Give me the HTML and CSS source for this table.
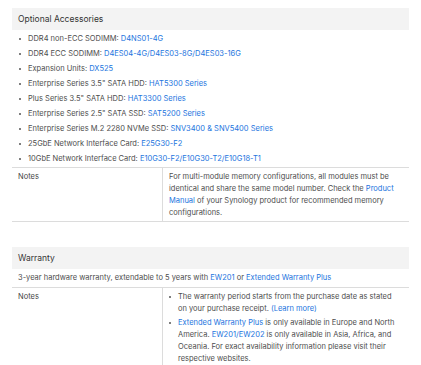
FILE: index.html
```html
<!DOCTYPE html>
<html>
<head>
<meta charset="utf-8">
<link rel="stylesheet" href="styles.css">
</head>
<body>
<section class="spec">
  <div class="spec-head">Optional Accessories</div>
  <ul class="acc-list">
    <li>DDR4 non-ECC SODIMM: <a href="#">D4NS01-4G</a></li>
    <li>DDR4 ECC SODIMM: <a href="#">D4ES04-4G/D4ES03-8G/D4ES03-16G</a></li>
    <li>Expansion Units: <a href="#">DX525</a></li>
    <li>Enterprise Series 3.5" SATA HDD: <a href="#">HAT5300 Series</a></li>
    <li>Plus Series 3.5" SATA HDD: <a href="#">HAT3300 Series</a></li>
    <li>Enterprise Series 2.5" SATA SSD: <a href="#">SAT5200 Series</a></li>
    <li>Enterprise Series M.2 2280 NVMe SSD: <a href="#">SNV3400 &amp; SNV5400 Series</a></li>
    <li>25GbE Network Interface Card: <a href="#">E25G30-F2</a></li>
    <li>10GbE Network Interface Card: <a href="#">E10G30-F2/E10G30-T2/E10G18-T1</a></li>
  </ul>
  <div class="row">
    <div class="row-label">Notes</div>
    <div class="row-value">For multi-module memory configurations, all modules must be identical and share the same model number. Check the <a href="#">Product Manual</a> of your Synology product for recommended memory configurations.</div>
  </div>
</section>

<section class="spec warranty">
  <div class="spec-head">Warranty</div>
  <div class="plain">3-year hardware warranty, extendable to 5 years with <a href="#">EW201</a> or <a href="#">Extended Warranty Plus</a></div>
  <div class="row">
    <div class="row-label">Notes</div>
    <div class="row-value">
      <ul class="note-list">
        <li>The warranty period starts from the purchase date as stated on your purchase receipt. <a href="#">(Learn more)</a></li>
        <li><a href="#">Extended Warranty Plus</a> is only available in Europe and North America. <a href="#">EW201/EW202</a> is only available in Asia, Africa, and Oceania. For exact availability information please visit their respective websites.</li>
      </ul>
    </div>
  </div>
</section>
</body>
</html>
```
FILE: styles.css
```css
html, body {
  margin: 0;
  padding: 0;
  background: #fff;
}
body {
  padding: 8px 12px 0 12px;
  font-family: Inter, "Noto Sans", sans-serif;
  font-size: 7.5px;
  color: #4d4d4d;
}
a {
  color: #2274de;
  text-decoration: none;
}
.spec-head {
  background: #f3f3f3;
  height: 22px;
  line-height: 22px;
  padding-left: 6px;
  font-size: 8.5px;
  color: #333;
}
.acc-list {
  list-style: none;
  margin: 0;
  padding: 3px 0 3px 16px;
}
.acc-list li {
  position: relative;
  line-height: 11px;
  margin-bottom: 4px;
}
.acc-list li:last-child { margin-bottom: 0; }
.acc-list li::before,
.note-list li::before {
  content: "";
  position: absolute;
  left: -9px;
  top: 5px;
  width: 2px;
  height: 2px;
  border-radius: 50%;
  background: #555;
}
.row {
  display: flex;
  border-top: 1px solid #dcdcdc;
  border-bottom: 1px solid #dcdcdc;
}
.row-label {
  width: 151px;
  padding: 3px 6px;
  box-sizing: border-box;
  line-height: 12px;
  color: #444;
  border-right: 1px solid #dcdcdc;
}
.row-value {
  flex: 1;
  padding: 3px 14px 2px 6px;
  line-height: 12px;
}
.warranty {
  margin-top: 25px;
}
.plain {
  padding: 3px 6px 3px;
  line-height: 12px;
}
.warranty .row {
  border-bottom: none;
}
.note-list {
  list-style: none;
  margin: 0;
  padding: 0 0 0 9px;
}
.note-list li {
  position: relative;
  line-height: 12px;
  margin-bottom: 2px;
}
.note-list li:last-child { margin-bottom: 0; }
```
